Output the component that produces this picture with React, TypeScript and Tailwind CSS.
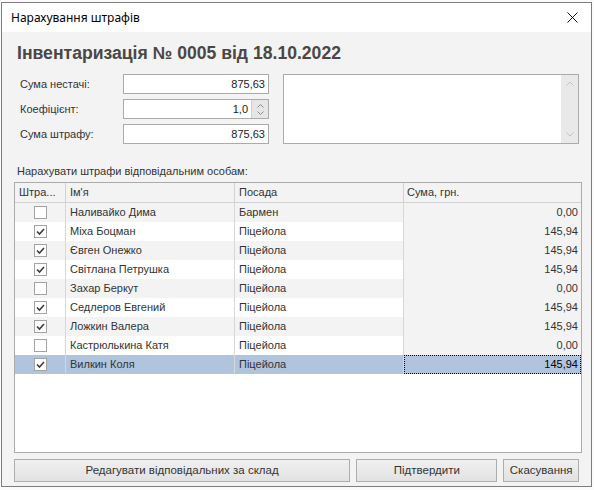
import React from 'react';

const rows = [
  { c: false, n: 'Наливайко Дима', p: 'Бармен', s: '0,00' },
  { c: true, n: 'Міха Боцман', p: 'Піцейола', s: '145,94' },
  { c: true, n: 'Євген Онежко', p: 'Піцейола', s: '145,94' },
  { c: true, n: 'Світлана Петрушка', p: 'Піцейола', s: '145,94' },
  { c: false, n: 'Захар Беркут', p: 'Піцейола', s: '0,00' },
  { c: true, n: 'Седлеров Евгений', p: 'Піцейола', s: '145,94' },
  { c: true, n: 'Ложкин Валера', p: 'Піцейола', s: '145,94' },
  { c: false, n: 'Кастрюлькина Катя', p: 'Піцейола', s: '0,00' },
  { c: true, n: 'Вилкин Коля', p: 'Піцейола', s: '145,94', sel: true },
];

function Check({ on }: { on: boolean }) {
  return (
    <div className="w-[13px] h-[13px] border border-[#a3a3a3] bg-white flex items-center justify-center">
      {on && (
        <svg width="11" height="11" viewBox="0 0 11 11">
          <polyline points="2,5.5 4.5,8 9,3" fill="none" stroke="#3c3c3c" strokeWidth="1.6" />
        </svg>
      )}
    </div>
  );
}

function Field({ value }: { value: string }) {
  return (
    <div className="w-[146px] h-[20px] border border-[#ababab] bg-white flex items-center justify-end pr-[3px] text-[11px] text-[#222]">
      {value}
    </div>
  );
}

export default function App() {
  return (
    <div className="w-[594px] h-[490px] bg-[#fbfbfb] overflow-hidden font-['Liberation_Sans',Arial,sans-serif]">
      <div className="ml-[1px] mt-[2px] w-[591px] h-[485px] border border-[#7d7d7d] flex flex-col bg-[#f3f3f3]">
        {/* title bar */}
        <div className="h-[29px] bg-white flex items-center justify-between pl-[9px] pr-[9px] shrink-0">
          <span className="text-[12px] text-black font-['Noto_Sans',sans-serif]">Нарахування штрафів</span>
          <svg width="11" height="11" viewBox="0 0 11 11" className="mr-[4px]">
            <path d="M0.5 0.5 L10.5 10.5 M10.5 0.5 L0.5 10.5" stroke="#111" strokeWidth="1" />
          </svg>
        </div>
        {/* body */}
        <div className="flex-1 flex flex-col px-[12px] pt-[6px]">
          <div className="h-[30px] leading-[30px] pl-[3px] text-[17.6px] font-bold text-[#4a4745]">
            Інвентаризація № 0005 від 18.10.2022
          </div>
          <div className="mt-[6px] flex">
            <div className="flex flex-col gap-[5px] pl-[6px]">
              <div className="flex items-center">
                <span className="w-[103px] text-[11px] text-[#333]">Сума нестачі:</span>
                <Field value="875,63" />
              </div>
              <div className="flex items-center">
                <span className="w-[103px] text-[11px] text-[#333]">Коефіцієнт:</span>
                <div className="w-[146px] h-[20px] border border-[#ababab] bg-white flex items-stretch text-[11px] text-[#222]">
                  <div className="flex-1 flex items-center justify-end pr-[3px]">1,0</div>
                  <div className="w-[17px] bg-[#e6e6e6] border-l border-[#d0d0d0] flex flex-col items-center justify-center gap-[3px]">
                    <svg width="7" height="4" viewBox="0 0 7 4">
                      <polyline points="0.5,3.5 3.5,0.5 6.5,3.5" fill="none" stroke="#8a8a8a" strokeWidth="1" />
                    </svg>
                    <svg width="7" height="4" viewBox="0 0 7 4">
                      <polyline points="0.5,0.5 3.5,3.5 6.5,0.5" fill="none" stroke="#8a8a8a" strokeWidth="1" />
                    </svg>
                  </div>
                </div>
              </div>
              <div className="flex items-center">
                <span className="w-[103px] text-[11px] text-[#333]">Сума штрафу:</span>
                <Field value="875,63" />
              </div>
            </div>
            <div className="ml-[14px] w-[298px] h-[70px] border border-[#ababab] bg-white flex justify-end">
              <div className="w-[17px] bg-[#e9e9e9] flex flex-col items-center justify-between py-[6px]">
                <svg width="8" height="5" viewBox="0 0 8 5">
                  <polyline points="0.5,4.5 4,1 7.5,4.5" fill="none" stroke="#c2c2c2" strokeWidth="1" />
                </svg>
                <svg width="8" height="5" viewBox="0 0 8 5">
                  <polyline points="0.5,0.5 4,4 7.5,0.5" fill="none" stroke="#c2c2c2" strokeWidth="1" />
                </svg>
              </div>
            </div>
          </div>
          <div className="mt-[20px] pl-[3px] text-[11px] leading-[14px] text-[#333]">
            Нарахувати штрафи відповідальним особам:
          </div>
          <div className="mt-[4px] w-[568px] h-[271px] border border-[#ababab] bg-white flex flex-col text-[11px] text-[#333]">
            <div className="h-[20px] border-b border-[#d2d2d2] bg-[#f3f3f3] flex shrink-0">
              <div className="w-[51px] border-r border-[#d2d2d2] pl-[4px] flex items-center">Штра...</div>
              <div className="w-[169px] border-r border-[#d2d2d2] pl-[4px] flex items-center">Ім'я</div>
              <div className="w-[169px] border-r border-[#d2d2d2] pl-[4px] flex items-center">Посада</div>
              <div className="flex-1 pl-[3px] flex items-center">Сума, грн.</div>
            </div>
            {rows.map((r, i) => {
              const bg = r.sel ? 'bg-[#b0c4de]' : i % 2 === 0 ? 'bg-[#f3f3f3]' : 'bg-white';
              return (
                <div key={i} className={`h-[19px] flex shrink-0 ${bg}`}>
                  <div className="w-[51px] border-r border-[#d7d7d7] flex items-center justify-center pl-[1px]">
                    <Check on={r.c} />
                  </div>
                  <div className="w-[169px] border-r border-[#d7d7d7] pl-[4px] flex items-center">{r.n}</div>
                  <div className="w-[169px] border-r border-[#d7d7d7] pl-[4px] flex items-center">{r.p}</div>
                  {r.sel ? (
                    <div className="flex-1 bg-[#b0c4de] border border-dotted border-black flex items-center justify-end pr-[2px] text-black">
                      {r.s}
                    </div>
                  ) : (
                    <div className="flex-1 bg-[#f3f3f3] flex items-center justify-end pr-[3px]">{r.s}</div>
                  )}
                </div>
              );
            })}
          </div>
          <div className="mt-[6px] flex text-[11.5px] text-[#333]">
            <button className="w-[338px] h-[23px] border border-[#adadad] bg-gradient-to-b from-[#f0f0f0] to-[#e2e2e2] flex items-center justify-center">
              Редагувати відповідальних за склад
            </button>
            <button className="ml-[6px] w-[142px] h-[23px] border border-[#adadad] bg-gradient-to-b from-[#f0f0f0] to-[#e2e2e2] flex items-center justify-center">
              Підтвердити
            </button>
            <button className="ml-[6px] w-[76px] h-[23px] border border-[#adadad] bg-gradient-to-b from-[#f0f0f0] to-[#e2e2e2] flex items-center justify-center">
              Скасування
            </button>
          </div>
        </div>
      </div>
    </div>
  );
}
